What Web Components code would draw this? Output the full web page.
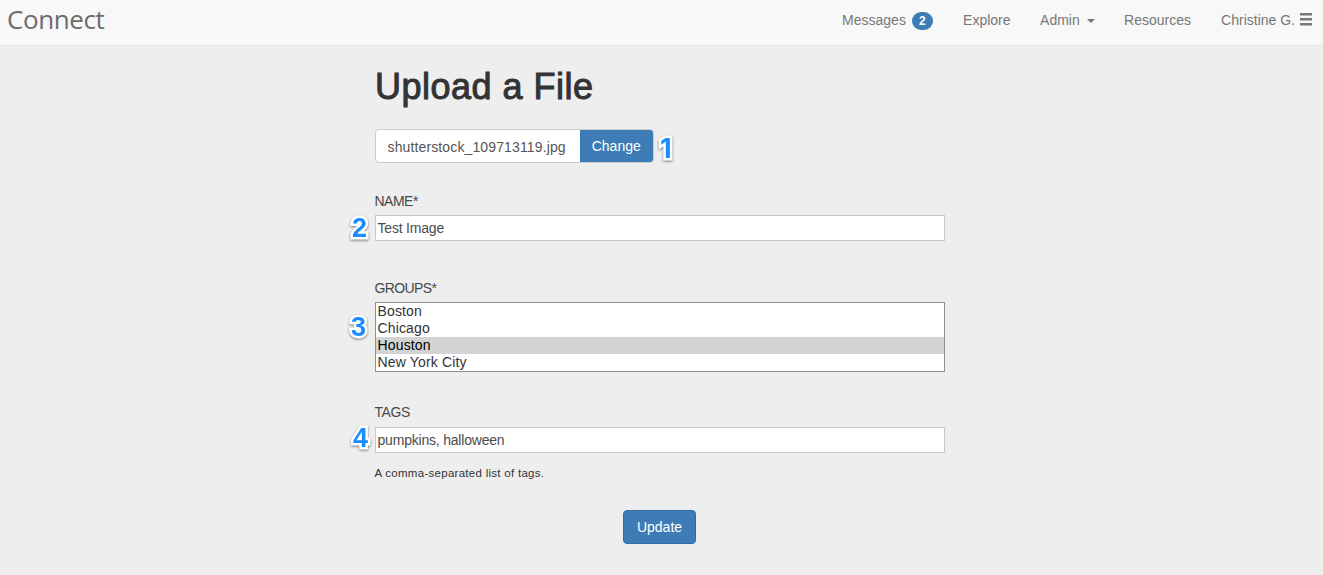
<!DOCTYPE html>
<html lang="en">
<head>
<meta charset="utf-8">
<title>Upload a File</title>
<style>
html,body{margin:0;height:100%}
body{background:#eee;font:14px/20px "Liberation Sans",Arial,sans-serif;color:#333;overflow:hidden}
</style>
</head>
<body>
<upload-page></upload-page>
<script>
const define = (name, html) => customElements.define(name, class extends HTMLElement {
  constructor() {
    super();
    this.attachShadow({mode: 'open'}).innerHTML = html;
  }
});

define('site-header', `
<style>
:host{display:flex;box-sizing:border-box;height:46px;background:#f8f8f8;border-bottom:1px solid #e4e4e4;justify-content:space-between;padding:0 11px 0 7px;color:#777}
.brand{font:26px/38px "Open Sans","Noto Sans",sans-serif;color:#6b6b6b;letter-spacing:-.4px}
nav{display:flex;padding-top:10px;height:20px}
nav>span{display:flex;white-space:nowrap}
.t{flex:none}
.badge{flex:none;width:21px;height:18px;margin:2px 0 0 6px;border-radius:9px;background:#3d7cb5;color:#fff;font-weight:700;font-size:12px;line-height:18px;text-align:center}
.caret{margin:9px 0 0 7px;border:4px solid transparent;border-top-color:#777;border-bottom:0;height:0}
svg{margin:3px 0 0 5px}
</style>
<div class="brand">Connect</div>
<nav>
<span style="width:121px"><span class="t">Messages</span><span class="badge">2</span></span>
<span style="width:77px">Explore</span>
<span style="width:84px"><span class="t">Admin</span><i class="caret"></i></span>
<span style="width:97px">Resources</span>
<span><span class="t">Christine G.</span><svg width="12" height="13" viewBox="0 0 12 13" fill="#777"><path d="M0 0h12v2.6H0zM0 5h12v2.4H0zM0 10h12v2.4H0z"/></svg></span>
</nav>`);

define('step-marker', `
<style>
:host{position:absolute;font:700 27px/30px "Liberation Sans",Arial,sans-serif;color:#1a8cff;-webkit-text-stroke:5px #fff;stroke-linejoin:round;paint-order:stroke fill;filter:drop-shadow(0 1.5px 1px rgba(0,0,0,.5))}
:host([narrow]){font-family:Inter,Roboto,sans-serif}
</style><slot></slot>`);

define('app-button', `
<style>
:host{display:flex;box-sizing:border-box;height:34px;align-items:center;justify-content:center;background:#3d7cb5;color:#fff;border:1px solid #316ca3;border-radius:4px}
</style><slot></slot>`);

define('file-picker', `
<style>
:host{display:flex;position:relative;box-sizing:border-box;width:279px;height:34px;border:1px solid #ccc;border-radius:4px;background:#fff}
.name{flex:1;padding-left:11.5px;line-height:35px;color:#555;letter-spacing:.13px}
app-button{width:73.5px;height:32px;border:0;border-radius:0 3px 3px 0}
</style>
<span class="name"><slot></slot></span><app-button>Change</app-button><slot name="marker"></slot>`);

define('form-field', `
<style>
:host{display:block;position:relative}
label{display:block;height:24px;color:#484848;letter-spacing:-.5px;text-indent:-.5px}
:host(.groups) label{letter-spacing:-.6px}
:host(.tags) label{height:25px;letter-spacing:-.4px}
</style><label><slot name="label"></slot></label><slot></slot>`);

define('text-box', `
<style>
:host{display:block;box-sizing:border-box;height:26px;border:1px solid #c8c8c8;background:#fff;padding-left:1.5px;line-height:25px;color:#4c4c4c;letter-spacing:-.2px}
</style><slot></slot>`);

define('list-box', `
<style>
:host{display:block;box-sizing:border-box;height:70px;border:1px solid #8e8e8e;background:#fff;color:#333;letter-spacing:.15px}
::slotted(div){height:17px;line-height:17px;padding-left:1.5px}
::slotted(.on){background:#d3d3d3;color:#000}
</style><slot></slot>`);

define('upload-page', `
<style>
:host{display:block}
main{width:570px;margin-left:375px;padding-top:21px}
h1{margin:0 0 22px;font-weight:400;font-size:36px;line-height:40px;letter-spacing:.5px;-webkit-text-stroke:1px #333}
.name{margin-top:28px}.groups{margin-top:37px}.tags{margin-top:30px}
.help{font-size:11.5px;line-height:20px;margin-top:10px;letter-spacing:.28px;text-indent:-.5px}
app-button.save{width:73px;margin:27px 0 0 248px}
</style>
<site-header></site-header>
<main>
<h1>Upload a File</h1>
<file-picker>shutterstock_109713119.jpg<step-marker slot="marker" narrow style="left:284px;top:4px">1</step-marker></file-picker>
<form-field class="name"><span slot="label">NAME*</span><text-box>Test Image</text-box><step-marker style="left:-23px;top:22px">2</step-marker></form-field>
<form-field class="groups"><span slot="label">GROUPS*</span><list-box><div>Boston</div><div>Chicago</div><div class="on">Houston</div><div>New York City</div></list-box><step-marker style="left:-24px;top:34px">3</step-marker></form-field>
<form-field class="tags"><span slot="label">TAGS</span><text-box>pumpkins, halloween</text-box><step-marker style="left:-22px;top:21px">4</step-marker></form-field>
<div class="help">A comma-separated list of tags.</div>
<app-button class="save">Update</app-button>
</main>`);
</script>
</body>
</html>
